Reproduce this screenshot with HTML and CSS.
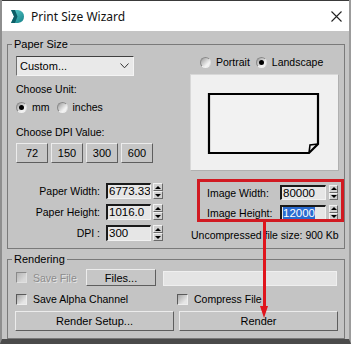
FILE: index.html
```html
<!DOCTYPE html>
<html lang="en">
<head>
    <meta charset="UTF-8">
    <meta name="viewport" content="width=device-width, initial-scale=1.0">
    <title>Print Size Wizard</title>
    <link rel="stylesheet" href="styles.css">
</head>
<body>
    <div class="window">
        <!-- Title Bar -->
        <div class="titlebar">
            <svg class="app-icon" width="15" height="15" viewBox="0 0 15 15">
                <defs>
                    <linearGradient id="tealGrad" x1="0" y1="0" x2="1" y2="1">
                        <stop offset="0" stop-color="#5fd0d0"/>
                        <stop offset="1" stop-color="#127f86"/>
                    </linearGradient>
                </defs>
                <path d="M1 1 L8 1 Q14 2 14 7.5 Q14 13 8 14 L1 14 L4 7.5 Z" fill="url(#tealGrad)"/>
                <path d="M1 1 L4 7.5 L1 14 L5 14 L7.5 7.5 L5 1 Z" fill="#0d5e66"/>
            </svg>
            <span class="title">Print Size Wizard</span>
            <svg class="close-btn" width="11" height="11" viewBox="0 0 11 11">
                <path d="M0.5 0.5 L10.5 10.5 M10.5 0.5 L0.5 10.5" stroke="#222" stroke-width="1.1"/>
            </svg>
        </div>

        <div class="client">
            <!-- Paper Size Group -->
            <fieldset class="group paper-group">
                <legend>Paper Size</legend>
                <div class="paper-grid">
                    <div class="col-left">
                        <div class="combo">
                            <span>Custom...</span>
                            <svg width="9" height="6" viewBox="0 0 9 6">
                                <polyline points="0.5,0.5 4.5,4.8 8.5,0.5" fill="none" stroke="#333" stroke-width="1"/>
                            </svg>
                        </div>
                        <div class="text-line unit-label">Choose Unit:</div>
                        <div class="radio-row">
                            <span class="radio checked"></span><span class="radio-text">mm</span>
                            <span class="radio"></span><span class="radio-text">inches</span>
                        </div>
                        <div class="text-line dpi-label">Choose DPI Value:</div>
                        <div class="dpi-buttons">
                            <button class="btn">72</button>
                            <button class="btn">150</button>
                            <button class="btn">300</button>
                            <button class="btn">600</button>
                        </div>
                        <div class="field-list">
                            <div class="field-row">
                                <span class="field-label">Paper Width:</span>
                                <div class="field"><span>6773.33</span></div>
                                <div class="spinner"><span class="up"></span><span class="down"></span></div>
                            </div>
                            <div class="field-row">
                                <span class="field-label">Paper Height:</span>
                                <div class="field"><span>1016.0</span></div>
                                <div class="spinner"><span class="up"></span><span class="down"></span></div>
                            </div>
                            <div class="field-row">
                                <span class="field-label">DPI :</span>
                                <div class="field"><span>300</span></div>
                                <div class="spinner"><span class="up"></span><span class="down"></span></div>
                            </div>
                        </div>
                    </div>

                    <div class="col-right">
                        <div class="radio-row orient-row">
                            <span class="radio"></span><span class="radio-text">Portrait</span>
                            <span class="radio checked"></span><span class="radio-text">Landscape</span>
                        </div>
                        <div class="preview">
                            <svg width="149" height="97" viewBox="0 0 149 97">
                                <path d="M19 20 H128 V70 L119 79 H19 Z" fill="#f2f2f2" stroke="#000" stroke-width="2.2"/>
                                <polyline points="119,79 120,71 128,70" fill="none" stroke="#000" stroke-width="1.6"/>
                            </svg>
                        </div>
                        <div class="image-fields">
                            <div class="field-row">
                                <span class="img-label">Image Width:</span>
                                <div class="field img-field"><span>80000</span></div>
                                <div class="spinner"><span class="up"></span><span class="down"></span></div>
                            </div>
                            <div class="field-row">
                                <span class="img-label">Image Height:</span>
                                <div class="field img-field"><span class="selected">12000</span></div>
                                <div class="spinner"><span class="up"></span><span class="down"></span></div>
                            </div>
                        </div>
                        <div class="text-line file-size">Uncompressed file size: 900 Kb</div>
                    </div>
                </div>
            </fieldset>

            <!-- Rendering Group -->
            <fieldset class="group render-group">
                <legend>Rendering</legend>
                <div class="render-row first">
                    <span class="check disabled"></span>
                    <span class="check-text disabled-text">Save File</span>
                    <button class="btn files-btn">Files...</button>
                    <div class="path-box"></div>
                </div>
                <div class="render-row second">
                    <span class="check"></span>
                    <span class="check-text alpha-text">Save Alpha Channel</span>
                    <span class="check"></span>
                    <span class="check-text">Compress File</span>
                </div>
                <div class="render-row buttons">
                    <button class="btn wide-btn">Render Setup...</button>
                    <button class="btn wide-btn">Render</button>
                </div>
            </fieldset>
        </div>

        <!-- Annotation overlay -->
        <div class="callout"></div>
        <div class="arrow-line"></div>
        <div class="arrow-head"></div>
    </div>
</body>
</html>
```

FILE: styles.css
```css
/* General Reset */
* {
    box-sizing: border-box;
    margin: 0;
    padding: 0;
}

body {
    font-family: "Liberation Sans", Arial, sans-serif;
    font-size: 10.5px;
    color: #000;
    background-color: #4a4a4a;
    width: 351px;
    height: 344px;
    overflow: hidden;
}

/* Window frame */
.window {
    position: relative;
    width: 351px;
    height: 344px;
    background-color: #c4c4c4;
    border-left: 2px solid #8e8e8e;
    border-right: 2px solid #9c9c9c;
    border-bottom: 5px solid #4b4b4b;
    display: flex;
    flex-direction: column;
}

/* Title bar */
.titlebar {
    height: 31px;
    flex-shrink: 0;
    background-color: #fff;
    border-top: 1px solid #3a3a3a;
    display: flex;
    align-items: center;
    padding-left: 8px;
    padding-right: 7px;
}

.title {
    font-family: "Noto Sans", "Open Sans", sans-serif;
    font-size: 12px;
    margin-left: 6px;
    color: #111;
    flex: 1;
}

.close-btn {
    margin-top: 1px;
}

/* Client area */
.client {
    flex: 1;
    display: flex;
    flex-direction: column;
}

/* Group boxes */
.group {
    border: 1px solid #7a7a7a;
    margin-left: 5px;
    margin-right: 4px;
    padding: 5px 1px 0 8px;
    min-width: 0;
}

.group legend {
    line-height: 14px;
    height: 14px;
    padding: 0 2px;
    margin-left: -4px;
    font-size: 11px;
}

.paper-group {
    margin-top: 6px;
    height: 212px;
}

.render-group {
    margin-top: 3px;
    height: 87px;
    padding-top: 3px;
}

/* Paper Size layout */
.paper-grid {
    display: grid;
    grid-template-columns: 147px 153px;
    column-gap: 27px;
}

.col-left,
.col-right {
    display: flex;
    flex-direction: column;
}

.text-line {
    height: 16px;
    line-height: 16px;
    white-space: nowrap;
}

.combo {
    width: 118px;
    height: 20px;
    background-color: #e9e9e9;
    border-top: 1px solid #404040;
    border-left: 1px solid #707070;
    border-right: 1px solid #f4f4f4;
    border-bottom: 1px solid #f4f4f4;
    display: flex;
    align-items: center;
    justify-content: space-between;
    padding: 0 4px 0 3px;
    font-size: 11px;
}

.unit-label {
    margin-top: 5px;
}

.radio-row {
    display: flex;
    align-items: center;
    height: 16px;
    margin-top: 2px;
}

.radio {
    width: 11px;
    height: 11px;
    border-radius: 50%;
    background: linear-gradient(135deg, #9a9a9a, #f2f2f2 70%);
    border: 1px solid #8a8a8a;
    border-bottom-color: #f0f0f0;
    border-right-color: #e0e0e0;
    position: relative;
    flex-shrink: 0;
}

.radio.checked::after {
    content: "";
    position: absolute;
    left: 2px;
    top: 2px;
    width: 5px;
    height: 5px;
    border-radius: 50%;
    background-color: #000;
}

.radio-text {
    margin-left: 5px;
    margin-right: 7px;
}

.dpi-label {
    margin-top: 9px;
}

.dpi-buttons {
    display: flex;
    gap: 3px;
    margin-top: 3px;
}

.btn {
    font-family: "Liberation Sans", Arial, sans-serif;
    font-size: 11px;
    color: #000;
    background-color: #c6c6c6;
    border: 1px solid;
    border-color: #ececec #5e5e5e #5e5e5e #ececec;
    height: 20px;
}

.dpi-buttons .btn {
    width: 32px;
}

/* Numeric fields */
.field-list {
    display: flex;
    flex-direction: column;
    gap: 5px;
    margin-top: 20px;
}

.field-row {
    display: flex;
    align-items: center;
    height: 16px;
}

.field-label {
    width: 84px;
    text-align: right;
    white-space: nowrap;
}

.field {
    width: 45px;
    height: 16px;
    margin-left: 6px;
    background-color: #e6e6e6;
    border-top: 2px solid #1a1a1a;
    border-left: 2px solid #1a1a1a;
    border-right: 1px solid #f2f2f2;
    border-bottom: 1px solid #f2f2f2;
    overflow: hidden;
    white-space: nowrap;
    font-size: 11.5px;
    line-height: 13px;
    padding-left: 1px;
}

.spinner {
    width: 10px;
    height: 16px;
    margin-left: 2px;
    display: flex;
    flex-direction: column;
}

.spinner span {
    flex: 1;
    background-color: #d0d0d0;
    border: 1px solid;
    border-color: #f2f2f2 #6a6a6a #6a6a6a #f2f2f2;
    display: flex;
    align-items: center;
    justify-content: center;
}

.spinner .up::before {
    content: "";
    border-left: 3px solid transparent;
    border-right: 3px solid transparent;
    border-bottom: 3px solid #000;
}

.spinner .down::before {
    content: "";
    border-left: 3px solid transparent;
    border-right: 3px solid transparent;
    border-top: 3px solid #000;
}

/* Right column */
.orient-row {
    margin-top: -1px;
    height: 14px;
    padding-left: 10px;
}

.orient-row .radio-text {
    margin-right: 6px;
}

.preview {
    margin-top: 5px;
    width: 149px;
    height: 97px;
    background-color: #f0f0f0;
    border: 1px solid #b0b0b0;
    border-top-color: #d8d8d8;
    border-left-color: #d8d8d8;
}

.preview svg {
    display: block;
    margin: -1px;
}

.image-fields {
    display: flex;
    flex-direction: column;
    gap: 5px;
    margin-top: 14px;
    padding-left: 17px;
}

.image-fields .field-row {
    height: 15px;
}

.img-label {
    width: 73px;
    white-space: nowrap;
}

.img-field {
    width: 46px;
    height: 15px;
    margin-left: 0;
}

.image-fields .spinner {
    width: 9px;
    height: 15px;
    margin-left: 3px;
}

.selected {
    background-color: #2a6bd0;
    color: #fff;
}

.file-size {
    margin-top: 7px;
    padding-left: 1px;
}

/* Rendering group */
.render-row {
    display: flex;
    align-items: center;
}

.render-row.first {
    height: 17px;
}

.check {
    width: 11px;
    height: 11px;
    flex-shrink: 0;
    border: 1px solid;
    border-color: #5a5a5a #eeeeee #eeeeee #5a5a5a;
    background: linear-gradient(135deg, #a8a8a8, #e6e6e6 75%);
}

.check.disabled {
    border-color: #8a8a8a #e0e0e0 #e0e0e0 #8a8a8a;
    background: linear-gradient(135deg, #b6b6b6, #d8d8d8 75%);
}

.check-text {
    margin-left: 6px;
    white-space: nowrap;
}

.disabled-text {
    color: #8c8c8c;
    text-shadow: 1px 1px 0 #e4e4e4;
    width: 48px;
}

.files-btn {
    width: 70px;
    height: 17px;
    margin-left: 5px;
}

.path-box {
    width: 174px;
    height: 15px;
    margin-left: 7px;
    margin-top: 2px;
    background-color: #e4e4e4;
    border: 1px solid #efefef;
}

.render-row.second {
    height: 14px;
    margin-top: 6px;
}

.alpha-text {
    width: 144px;
}

.render-row.buttons {
    margin-top: 5px;
    margin-left: -1px;
    gap: 5px;
}

.wide-btn {
    width: 159px;
    height: 20px;
}

/* Red annotation */
.callout {
    position: absolute;
    left: 195px;
    top: 179px;
    width: 147px;
    height: 43px;
    border: 3px solid #d11a22;
}

.arrow-line {
    position: absolute;
    left: 261px;
    top: 222px;
    width: 3px;
    height: 88px;
    background-color: #e0141c;
}

.arrow-head {
    position: absolute;
    left: 258px;
    top: 306px;
    border-left: 4.5px solid transparent;
    border-right: 4.5px solid transparent;
    border-top: 12px solid #e0141c;
}
```
